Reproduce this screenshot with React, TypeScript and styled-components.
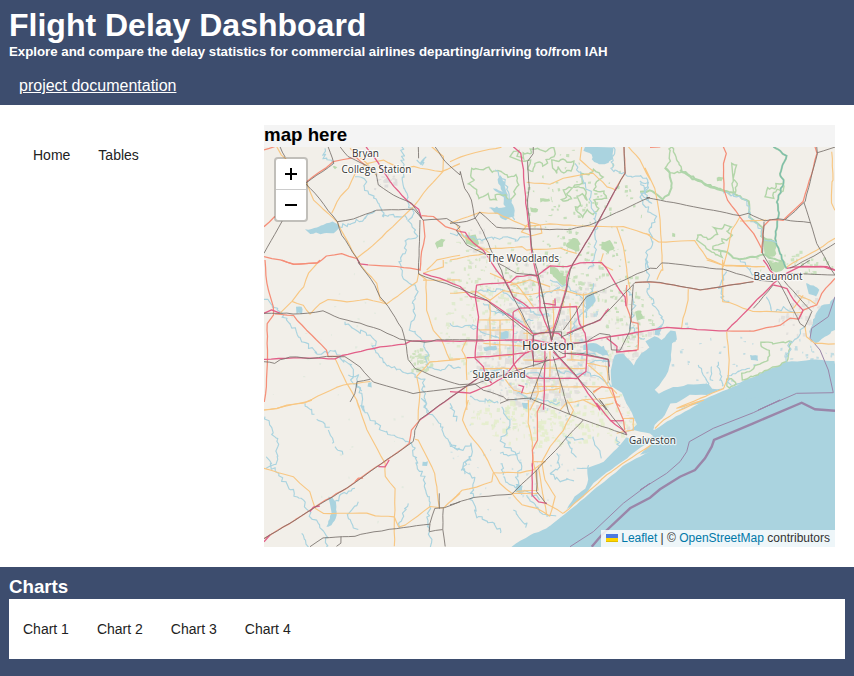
import React from 'react';
import styled, { createGlobalStyle } from 'styled-components';

const GlobalStyle = createGlobalStyle`
  * { box-sizing: border-box; }
  body { margin: 0; background: #fff; font-family: "Liberation Sans", Arial, sans-serif; color: #000; }
  h1, h3, h5 { margin: 0; }
`;

const Page = styled.div`
  height: 676px;
  display: flex;
  flex-direction: column;
`;
const Header = styled.header`
  height: 105px;
  padding: 7px 9px 0;
  background: #3d4d6e;
  color: #fff;
`;
const Title = styled.h1`
  font-size: 32px;
  line-height: 36px;
`;
const Subtitle = styled.h5`
  margin-top: 1px;
  font-size: 13.28px;
  line-height: 15px;
`;
const DocLink = styled.a`
  display: inline-block;
  margin: 18px 10px 0;
  font-size: 16px;
  line-height: 18px;
  color: #fff;
  text-decoration: underline;
`;
const Main = styled.main`
  display: grid;
  grid-template-columns: 245px 571px;
  gap: 10px;
  height: 462px;
  padding: 20px 9px;
`;
const Tabs = styled.nav<{ $inset: string }>`
  display: flex;
  gap: 28px;
  padding: ${p => p.$inset};
  background: #fff;
`;
const Tab = styled.a`
  font-size: 14px;
  line-height: 16px;
  color: #222;
`;
const MapPanel = styled.section`
  background: #f4f4f4;
`;
const Heading = styled.h3`
  font-size: 18.72px;
  line-height: 19px;
`;
const MapHeading = styled(Heading)`
  height: 22px;
`;
const MapFrame = styled.div`
  position: relative;
  width: 571px;
  height: 400px;
  overflow: hidden;
  background: #f2efe9;
`;
const MapCanvas = styled.svg`
  display: block;
`;
const ZoomControl = styled.div`
  position: absolute;
  left: 10px;
  top: 10px;
  width: 34px;
  border: 2px solid rgba(0, 0, 0, 0.2);
  border-radius: 4px;
  background: #fff;
  background-clip: padding-box;
`;
const ZoomButton = styled.button`
  display: flex;
  align-items: center;
  justify-content: center;
  width: 30px;
  height: 30px;
  padding: 0;
  border: 0;
  background: none;
  & + & { height: 31px; border-top: 1px solid #ccc; }
`;
const Attribution = styled.div`
  position: absolute;
  right: 0;
  bottom: 0;
  height: 17px;
  padding: 0 5px;
  background: rgba(255, 255, 255, 0.8);
  color: #333;
  font-size: 12px;
  line-height: 17px;
  white-space: nowrap;
  a { color: #0078a8; }
  svg { width: 12px; height: 8px; margin-right: 3px; }
`;
const Footer = styled.footer`
  flex: 1;
  padding: 10px 9px 0;
  background: #3d4d6e;
`;
const ChartsHeading = styled(Heading)`
  height: 22px;
  color: #fff;
`;
const ChartTabs = styled(Tabs)`
  height: 60px;
`;

/* Map geometry: a bare number selects a sector of the 3x3 grid, "x,y" pairs are thirds of a pixel inside it. */
type Pt = [number, number];
const parse = (s: string): Pt[] => {
  let sector = 1;
  const out: Pt[] = [];
  s.trim().split(/\s+/).forEach(tok => {
    if (!tok.includes(',')) { sector = Number(tok); return; }
    const [x, y] = tok.split(',').map(Number);
    out.push([-4 + ((sector - 1) % 3) * 190 + x / 3, -27 + Math.floor((sector - 1) / 3) * 140 + y / 3]);
  });
  return out;
};
const toPath = (pts: Pt[], close = false) =>
  pts.map(([x, y], i) => `${i ? 'L' : 'M'}${x.toFixed(1)} ${y.toFixed(1)}`).join('') + (close ? 'Z' : '');
const random = (seed: number) => () => {
  seed = (seed * 16807) % 2147483647;
  return seed / 2147483647;
};
const meander = (pts: Pt[], amp: number, step: number, seed: number): Pt[] => {
  const r = random(seed * 7919 + 13);
  const out: Pt[] = [pts[0]];
  for (let i = 1; i < pts.length; i++) {
    const [ax, ay] = pts[i - 1];
    const [bx, by] = pts[i];
    const n = Math.max(1, Math.round(Math.hypot(bx - ax, by - ay) / step));
    for (let k = 1; k <= n; k++) {
      out.push([ax + ((bx - ax) * k) / n + (r() - 0.5) * amp, ay + ((by - ay) * k) / n + (r() - 0.5) * amp]);
    }
  }
  return out;
};

const gulf = `8 185,440 240,405 290,385 340,345 375,290 405,265 415,240 410,205 460,185 500,145 530,110 515,100 540,92
 560,75 545,40 530,10 5 515,400 485,380 482,330 495,285 520,280 550,315 575,280 600,262 6 15,245 45,228 65,240 80,222 90,212
 108,215 110,240 95,252 92,300 78,350 45,390 55,400 100,382 160,372 205,372 215,388 260,383 340,350 440,306 500,300 545,300 585,303
 9 600,200 600,460 8 185,460`;
const islands = [
  '8 300,372 340,335 400,290 430,250 470,218 530,175 560,150 600,125 9 0,125 30,120 45,122 0,163 8 600,155 530,190 440,262 390,305 300,378',
  '9 40,90 45,75 75,45 90,12 6 110,430 150,405 200,405 260,380 300,372 6 250,393 115,450 9 190,5 120,42 70,72 45,88',
  '8 520,100 555,92 600,100 610,110 560,120 525,112',
];
const lakes = [
  '2 405,80 400,92 425,105 425,120 440,132 475,130 490,110 488,80',
  '2 150,165 165,190 172,235 185,240 195,290 165,298 145,285 115,262 165,262 160,235 130,205 160,215 140,180',
  '1 135,328 170,325 190,312 215,305 235,315 235,328 220,342 190,340 150,340',
  '4 108,140 125,140 128,160 110,160',
  '7 205,290 225,300 232,345 215,378 200,380 212,345 212,315',
  '7 488,185 502,183 500,195 488,195',
  '5 405,110 425,90 435,105 440,125 415,150 405,140',
  '6 585,110 568,130 545,135 520,180 510,215 515,240 530,248 560,225 585,210',
  '6 330,285 352,285 352,302 335,302', '6 498,70 520,75 540,90 530,110 505,100',
  '8 198,258 215,255 215,275 198,275', '6 45,210 65,190 60,225 45,225',
  '4 325,368 336,368 335,382 325,380', '5 148,215 175,215 175,235 148,238', '5 100,262 140,258 140,270 100,272',
  '5 400,255 430,250 460,260 480,290 460,285 430,275 400,270',
  '6 320,415 360,415 350,425 320,425', '5 215,428 235,430 230,445 218,442',
];
const rivers = [
  '1 195,85 190,115 220,130', '1 285,170 315,185 320,215 345,230 365,270 370,290 430,285 440,295', '1 235,320 300,302 350,270',
  '1 425,80 430,110 425,160 435,200 445,245 460,290 445,300 465,325 470,350 440,360 435,400 420,430 4 425,10 430,50 460,75 470,100 455,130 465,160 450,200 460,220 490,240 500,280 500,320 540,330 570,315 600,325',
  '4 12,118 30,130 65,165 90,195 120,235 170,280 230,275 240,300 270,310 280,340 275,365 300,390 310,450 7 305,20 350,75 400,110 440,120 460,140 470,200 490,230 500,270 515,310 500,360 510,410 515,440',
  '4 255,185 290,215 320,215 345,245 340,260 370,310 390,320 430,335 460,345 490,360 490,390 500,450 7 490,0 500,30 540,70 560,110 580,145 600,150',
  '7 15,50 35,95 55,125 50,190 20,205', '7 20,170 45,215 80,250 100,280 135,310 150,345 175,370 200,410 200,440',
  '7 135,10 160,45', '7 170,58 205,80', '7 205,90 220,130', '7 225,140 250,160', '7 285,265 240,285 220,315', '7 295,305 265,340 275,375 290,388', '7 445,310 430,345 415,380',
  '7 125,400 140,440', '1 470,120 485,130 500,112 485,125 488,137', '2 0,340 100,360 160,350 200,365 235,345',
  '2 135,150 165,190 175,250 190,295', '2 375,130 400,180 420,220 435,290 440,330 435,410 420,450',
  '2 490,80 485,150 520,160 550,175 590,170 590,210 575,220 600,250 3 0,180 20,190 15,215 0,230 20,265 45,290 30,340 40,370 15,400 30,445 6 20,0 25,50 25,100 45,140 70,180 55,220',
  '3 250,220 300,230 330,260 330,300 365,330 370,360 410,370',
  '6 260,35 240,80 250,120 270,130', '6 300,0 340,40 400,50', '6 380,110 400,155 430,145 460,155', '6 440,310 450,250 480,220 495,200',
  '6 175,315 205,375', '6 215,320 215,365', '6 235,305 245,380', '6 330,325 260,345 270,375',
  '5 150,90 200,125 240,150 260,170 300,165', '5 300,60 350,80 400,120 410,170', '5 430,70 420,130 380,180 360,225',
  '5 60,200 110,220 180,240 220,245', '5 140,150 200,180 250,180', '5 60,335 160,330 200,350 260,340 300,360',
  '5 320,330 360,340 410,340 460,360 500,380', '5 530,80 555,130 540,200 580,240', '5 60,410 100,420 150,430',
  '5 0,190 40,200 80,195', '5 100,130 140,160 180,165', '5 80,100 110,90 150,90', '5 330,80 300,100 260,110', '5 420,310 450,300 480,300', '5 200,400 260,420 330,430',
  '8 60,170 40,200 70,230 65,300 80,350 130,370 155,400', '8 155,20 180,80 150,120 200,165 215,190 200,240 210,280',
  '8 150,160 180,170 210,160', '8 155,190 160,230', '8 190,330 230,380', '8 0,10 20,60',
  '8 320,160 330,200 300,220 330,240 370,240', '8 400,120 350,110 375,170', '8 0,125 30,150 65,130 60,180 35,190 40,220',
  '8 380,205 415,200', '8 430,110 455,170', '8 500,110 510,145', '8 230,285 280,340 320,350', '8 160,230 200,270 250,285 270,300',
  '4 265,345 290,345 300,395', '5 390,280 440,285 480,310',
];
const woods = [
  '2 65,145 100,150 115,142 125,155 145,150 175,170 200,165 205,195 190,215 195,225 175,240 165,225 135,225 140,238 120,240 115,222 85,235 80,210 70,205 55,190 75,180 60,165',
  '2 180,110 190,95 205,92 200,110 220,115 218,100 245,100 240,85 265,85 285,95 310,82 315,100 310,110 290,120 295,130 280,140 270,125 255,130 250,155 235,150 240,120 210,125',
  '2 305,120 325,125 340,115 350,125 370,125 365,155 350,150 340,160 325,140 320,160 310,145',
  '2 340,210 355,202 365,205 350,220 365,235 345,245 335,238 350,230',
  '2 395,160 415,165 430,150 445,160 460,170 435,190 440,200 430,210 460,215 470,235 430,240 445,265 430,285 410,270 400,290 385,275 375,262 395,255 380,230 395,222 410,240 405,205 370,200 395,190',
  '3 75,145 90,125 88,85 98,80 108,120 118,128 125,155 90,160', '3 275,130 288,135 280,175 290,190 285,220 275,200 280,170',
  '3 375,230 382,205 405,205 410,192 430,190 430,215 410,210 400,220 400,235', '3 170,360 175,345 195,350 205,358 235,342 222,322 250,325 255,315 275,320 262,335 275,345 262,360 245,355 250,370 220,378 218,388 240,390 245,410 220,400 195,380',
  '6 305,340 335,330 345,318 385,300 388,270 365,262 363,248 395,246 400,252 425,248 452,244 440,305 305,362', '6 260,358 275,355 290,372 270,385 262,378',
];
const denseWoods = [
  '5 300,15 325,30 348,50 345,80 330,75 315,55 300,40', '3 370,355 395,358 410,372 405,410 385,412 370,395', '6 385,0 400,10 430,0 440,20 415,38 395,30',
  '2 455,365 480,362 495,385 475,400 455,385', '2 350,370 375,352 390,370 385,395 350,380', '5 555,155 575,150 580,175 560,180', '2 240,262 265,265 262,275 242,275',
  '2 270,235 300,235 295,247 272,245', '3 230,173 248,172 245,182 232,183', '3 97,338 108,340 105,350 97,348', '1 525,370 545,355 555,360 550,378 530,385', '1 218,140 230,140 226,147',
  '2 45,345 75,345 90,370 75,380 50,370',
];
const woodLines = ['3 0,215 30,212 70,237 92,215 92,160 75,145', '3 125,155 160,175 200,195 250,210 300,230 325,245 330,290 365,325 365,350 410,370', '3 120,150 160,172 205,200 250,212 270,225',
  '3 400,80 438,105 420,160 432,190 412,235 415,290 405,345 418,400 440,445', '3 235,392 265,400 290,418 320,415 370,405 430,425'];

const primary = [
  '1 50,80 65,105 78,118', '1 140,188 160,240 232,305 265,370 300,430 4 305,20 350,70 360,120 378,130',
  '1 215,280 240,230 265,205 285,160 320,130 370,120 420,145 460,140 545,155 600,130', '1 515,80 550,110 548,155 490,220 460,260 350,365 310,400 290,415',
  '1 270,85 320,130 350,165', '1 500,450 530,420 600,405', '4 180,0 145,40 130,80 95,125 130,135 150,163 180,130 205,118 260,125 320,118 380,132 430,95 470,65 475,40',
  '4 95,125 60,160', '4 12,450 50,445 140,425 190,400 250,375 330,365', '4 225,295 250,350 290,420 300,450 7 290,0 320,90 375,190 375,230 405,265 403,440',
  '4 475,40 498,60 500,150 520,210 545,240 570,300', '4 600,298 510,305 470,350 480,400 475,450 7 475,60', '4 600,60 490,60', '4 490,40 550,20 550,0',
  '7 12,30 50,25 80,15 130,10 155,0', '7 12,205 100,230 120,250 150,275 165,325 190,340 320,340 345,348 403,350',
  '7 403,350 415,380 435,375 510,320 550,325 600,280', '7 465,118 475,120 525,220 537,320',
  '2 0,125 50,105 100,92 155,82', '2 230,187 300,193 340,175 390,165 430,160 470,200 500,210', '2 395,80 390,120 430,155',
  '2 0,310 90,278 140,280 230,320 215,335 245,347 275,340 272,315 240,308 225,320 300,312 440,320 520,320 600,345 3 20,342 55,367 165,362 200,415 250,435 375,440',
  '2 535,80 570,120 600,180 3 15,145 45,205 60,300 68,450 6 65,30 50,60', '2 500,320 520,380 530,450 5 530,30 540,90',
  '2 75,390 215,380 230,390 330,385 380,400', '2 0,420 60,408 110,400', '2 20,315 40,350 80,375 120,400', '2 460,400 450,430 490,450',
  '3 300,290 275,330 265,380 250,440 6 247,0 248,125 270,128 310,145 340,155 380,155 490,158', '3 575,95 580,180 575,185 575,250 585,270',
  '3 585,355 530,390 440,440', '3 300,303 380,300', '6 145,88 145,120 130,175 125,203',
  '6 260,215 268,300 265,350 250,385 180,415 110,445 9 190,0 110,35 70,60 45,85', '6 495,200 500,230 525,250 585,252', '6 200,0 260,18 370,20',
  '6 475,105 510,120 530,135', '6 460,145 490,105',
  '8 55,0 38,60 60,105 95,150 130,215 150,250 185,280 215,315 260,325 300,348 315,290 285,240 275,185 300,140 340,90 370,30 350,0',
  '8 130,218 210,218 250,210 285,185 250,185', '8 130,218 125,245 80,262 35,270 0,305', '8 235,0 235,70 245,110 250,185 265,270 200,275', '8 265,200 275,260 290,345',
  '8 185,280 265,280', '8 290,312 340,340', '8 340,340 385,300 430,262 470,225 530,182 600,137 9 15,150', '8 400,0 440,20 490,10', '8 500,100 550,90 550,55 520,55',
  '5 0,100 80,95 120,120 160,92 230,105 330,90 400,105 440,95', '5 85,180 190,180', '5 85,210 190,210', '5 100,250 230,260', '5 120,120 120,260', '5 150,180 150,300',
  '5 0,298 100,290 190,285', '5 50,240 35,270 50,300 50,360', '5 90,325 180,325', '5 190,325 410,325', '5 250,380 450,380', '5 260,355 265,400 240,450', '5 330,355 330,400',
  '5 205,150 230,200 235,280', '5 340,110 340,140 390,140', '5 310,120 310,230', '5 360,130 365,300', '5 410,250 410,310 470,320 475,370',
  '5 160,350 190,390 230,400 330,385', '5 430,400 455,380 485,385 500,400', '5 50,380 50,450', '5 120,40 200,75 250,140', '5 300,245 300,350', '5 220,300 275,300', '5 350,300 410,300',
  '5 180,75 240,60 300,80', '5 415,315 455,350 475,380 500,430', '5 510,410 400,420 350,430 330,450', '5 400,100 400,210', '5 220,220 280,220 310,200',
];
const trunk = [
  '1 12,90 45,80', '1 140,185 195,145 220,125 250,118 290,112 315,135', '1 12,320 45,290', '1 485,287 520,290 555,320 600,335 2 20,333',
  '1 490,300 495,350 485,395 480,450 4 475,25', '1 12,410 60,420 100,433 175,428 200,408 245,402 290,415', '1 325,435 410,440 470,448 4 480,30',
  '4 15,0 20,70 40,140 40,165 22,190 22,270 20,380 12,425', '4 65,0 100,13 170,10 180,0', '4 45,162 100,167 140,210 200,270 205,290 240,288',
  '7 480,60 455,90 447,130 410,160 380,180 300,235 260,265 230,280 180,312 90,370 12,415',
  '3 250,80 258,100 250,130 252,210 262,240 300,290 340,340 365,385', '3 525,80 530,100 515,160 490,245 430,300 390,300 370,320 365,400',
  '3 30,82 60,82', '6 260,213 340,213 420,195 450,175 475,178 490,150 530,135 545,100 585,55', '5 555,68 600,65 6 60,68 180,90 340,65',
  '5 530,75 530,140 545,185 565,190 565,270 520,275', '8 275,10 262,35 262,120 248,150 247,200', '8 495,0 520,60 525,90', '2 522,80 525,160 500,200', '5 430,395 455,380 485,385 500,430 8 510,20',
  '7 285,245 295,235 310,235',
];
const motorway = [
  '1 318,80 355,130 390,185 440,240 475,268 485,295', '1 290,415 300,432 325,435', '4 490,40 540,55 600,80 5 60,110 110,120 170,160 250,220',
  '4 12,298 100,294 225,296 245,287 360,260 435,252 450,243 600,243 5 250,240 300,250', '4 12,160 35,150 60,160',
  '5 90,350 0,413 4 520,450 7 480,60', '7 12,425 30,405', '7 150,335 160,322 180,318', '7 355,200 375,200 387,180',
  '2 190,80 212,100 220,150 228,250 240,340 245,400 255,450 5 268,80 270,150 300,220 305,245', '2 30,335 45,338 70,370 100,390 140,450 5 170,70 190,110 220,130 240,145',
  '2 500,200 440,315 370,430 350,470 5 350,80 330,150 310,210 305,240', '3 370,420 390,450 6 410,50', '3 440,445 480,440 550,440 585,450',
  '6 260,212 400,70 440,40 480,20 560,20 585,30', '5 300,250 405,248 450,235 600,211 6 80,203 150,207 260,213', '6 400,75 440,85 460,120 490,150 475,180',
  '5 125,370 105,345 100,320 75,295 80,240 85,170 75,110 80,75 180,68 200,50 240,45 260,48 300,18 350,20 390,8 455,8 470,25 495,70 525,110 528,140',
  '5 190,155 210,145 380,140 387,190 405,220 412,280 408,335 380,355 240,355 205,335 190,310 190,155', '5 250,225 275,217 325,220 345,240 345,290 310,300 250,305 245,265 250,225',
  '5 50,293 120,290 230,278 290,250', '5 0,395 60,400 120,375 165,350 190,315 230,275', '5 285,270 282,420 280,450',
  '5 310,275 380,350 450,450 8 440,10 480,60 530,100', '8 247,190 247,285 265,305 290,310', '8 480,62 520,62', '5 350,220 450,180 475,145',
  '5 470,235 500,260 500,275 560,272', '5 350,280 410,285 475,298 478,320', '5 205,375 220,380 215,400', '5 280,130 315,135 315,115',
];
const rail = [
  '1 60,80 75,112', '1 137,190 222,130 205,80', '1 240,80 265,110 345,150 355,195 400,225 455,250 485,295', '1 12,400 65,305',
  '1 135,190 165,220 232,305 245,345 300,430 4 295,8 345,75 360,110 385,140 425,205 435,240 445,300 465,325 510,345 600,375 5 75,372',
  '1 232,305 280,297 350,270 460,268 490,300 560,295 600,320 2 20,330 50,375 110,405', '1 480,300 475,450 4 475,43 600,85 5 110,120 250,230',
  '1 525,80 555,125 600,165 2 30,155 45,205 65,240 72,290 100,335 120,385 145,430 5 170,75 245,215', '1 475,80 475,115',
  '4 12,160 80,160 120,162 190,153 240,175 300,190 360,210 420,238 495,247 530,240 600,240 5 100,240', '4 12,305 45,310 60,300 90,290 150,295 200,290 255,290 300,320 340,367 460,400 600,382 5 75,372 300,300',
  '4 330,358 290,365 285,400 270,425', '5 90,350 0,413 4 520,450 7 480,58 465,90 460,125 380,180 260,265 180,312 90,370 12,415',
  '7 150,440 190,413 285,408 320,400 410,385 510,372 525,325 555,322 600,305', '7 550,325 548,388 555,440', '7 508,395 548,388', '7 510,372 508,395', '7 538,280 538,325', '7 243,410 243,430 230,440',
  '2 250,80 250,100 232,125 237,200 232,240 240,330 248,400 262,450 5 305,240', '2 0,310 50,305 75,295 90,277 140,322 240,328 360,328 420,315 600,232 3 20,232 300,287 325,280 375,303 415,297 510,308',
  '2 522,80 525,160 490,220 440,315 370,430 360,450 5 350,90 305,240', '3 530,80 532,100 495,245 435,300', '3 532,98 585,82', '3 372,305 368,400 395,450',
  '3 492,248 510,305 530,370 575,450 6 585,45', '3 585,370 540,398 450,445', '5 340,210 410,110 600,25 6 50,25 65,8 250,28 290,40 350,60 400,65', '5 335,230 450,178 555,68 600,65 6 60,68 180,90 340,65',
  '6 340,145 400,75', '6 400,40 430,90 480,190 495,200 515,155 430,60', '6 585,45 440,40', '6 480,20 510,0', '2 145,430 5 200,40 265,47 305,240',
  '5 550,75 540,215 510,270 485,270 480,225 450,220 410,245 300,260', '5 300,260 340,280 400,280 475,298 478,360', '5 310,270 470,450 8 450,0 530,105', '5 310,290 355,450 8 360,43', '5 290,290 240,420',
  '5 75,372 100,390 160,410 170,420 240,415 8 250,0 360,43 400,60 530,105', '8 400,60 260,210 185,283 70,292 0,315 7 570,315', '8 260,210 260,275 290,312', '5 250,220 335,215 335,235', '5 250,225 250,320', '8 150,10 175,0',
];
const boundary = '8 360,440 430,395 520,310 600,250 9 0,270 80,220 120,185 140,155 148,125 220,85 340,38 420,0 6 355,450 470,400 580,398 565,330 540,270 510,235 515,205 565,170 585,110';
const limit = '8 425,440 455,405 540,325 600,293 9 60,268 120,230 165,210 195,175 215,140 222,120 340,70 485,8 525,28 585,32';

/* cx, cy, rx, ry, count, fill, max size */
type Patch = [number, number, number, number, number, string, number];
const patches: Patch[] = [
  [270, 208, 62, 52, 480, '#dddcda', 5], [285, 145, 60, 38, 90, '#dddcda', 4], [370, 200, 35, 30, 50, '#dddcda', 4],
  [275, 205, 95, 85, 300, '#dbeac9', 3.2], [290, 275, 85, 25, 190, '#e2edc8', 4], [320, 60, 60, 60, 90, '#b9d9ae', 2.6],
  [300, 125, 70, 35, 120, '#bfdcb3', 2.8], [155, 213, 12, 12, 50, '#c6deb4', 3], [220, 120, 40, 40, 65, '#cfe3be', 3], [205, 170, 35, 35, 45, '#dbeac9', 3],
  [285, 205, 70, 60, 60, '#b8d7df', 3], [365, 165, 25, 40, 55, '#bfdcb3', 2.8], [530, 115, 40, 14, 30, '#c1dfb4', 3],
  [535, 165, 25, 25, 50, '#dddcda', 4], [118, 33, 14, 10, 22, '#d9d8d8', 3.5], [367, 232, 14, 30, 50, '#dddcda', 4],
  [445, 205, 60, 35, 30, '#b5d7e0', 2.2], [540, 210, 30, 20, 30, '#b5d7e0', 2.5], [212, 98, 14, 20, 16, '#dddcda', 4],
  [250, 300, 70, 80, 50, '#c8dfe2', 1.6], [90, 230, 85, 150, 35, '#dfe8dc', 1.5], [368, 266, 15, 18, 25, '#dddcda', 4],
];
const labels: [string, number, number, number, number][] = [
  ['Bryan', 101.5, 9.5, 27, 10], ['College Station', 112.5, 26, 70, 10], ['The Woodlands', 259, 115, 72, 10],
  ['Beaumont', 514, 133, 49, 10], ['Houston', 284, 203, 52, 13], ['Sugar Land', 235, 231, 53, 10], ['Galveston', 388.5, 297, 47, 10],
];

const Roads = ({ lines, color, width }: { lines: string[]; color: string; width: number }) => (
  <g fill="none" stroke={color} strokeWidth={width} strokeLinejoin="round">
    {lines.map((l, i) => <path key={i} d={toPath(meander(parse(l), 0.7, 7, i + 3))} />)}
  </g>
);

const RegionMap = () => (
  <MapCanvas width="571" height="400" viewBox="0 0 571 400">
    <rect width="571" height="400" fill="#f2efe9" />
    {patches.map(([cx, cy, rx, ry, n, fill, size], i) => {
      const r = random(i * 541 + 77);
      let d = '';
      for (let k = 0; k < n; k++) {
        const a = r() * 6.283;
        const q = Math.pow(r(), 0.62);
        const w = 0.8 + r() * size;
        const h = 0.8 + r() * size;
        const x = cx + Math.cos(a) * rx * q;
        const y = cy + Math.sin(a) * ry * q;
        d += `M${x.toFixed(1)} ${y.toFixed(1)}l${w.toFixed(1)} ${(r() - 0.5).toFixed(1)}l${(r() - 0.5).toFixed(1)} ${h.toFixed(1)}l${(-w).toFixed(1)} ${(r() - 0.5).toFixed(1)}z`;
      }
      return <path key={i} d={d} fill={fill} opacity=".8" />;
    })}
    <g fill="#aad3df">
      <path d={toPath(meander(parse(gulf), 1.2, 5, 4), true)} />
      {lakes.map((l, i) => <path key={i} d={toPath(meander(parse(l), 2, 3, i + 9), true)} />)}
    </g>
    <g fill="#f2efe9">{islands.map((l, i) => <path key={i} d={toPath(meander(parse(l), 0.8, 5, i), true)} />)}</g>
    <g fill="none" stroke="#b2d5a8" strokeWidth="1.4">
      {woods.map((l, i) => <path key={i} d={toPath(meander(parse(l), 1.6, 2.5, i + 5), true)} />)}
    </g>
    <g fill="#b9d9ae">
      {denseWoods.map((l, i) => <path key={i} d={toPath(meander(parse(l), 2, 2.5, i + 25), true)} />)}
    </g>
    <g fill="none" stroke="#afd5aa" strokeWidth="2">
      {woodLines.map((l, i) => <path key={i} d={toPath(meander(parse(l), 2, 3, i + 40))} />)}
    </g>
    <path fill="none" stroke="#7dbcae" strokeWidth="1.2" d={toPath(meander(parse(woodLines[3]), 2, 3, 43))} />
    <g fill="none" stroke="#aad3df" strokeWidth="1.15" strokeLinejoin="round">
      {rivers.map((l, i) => <path key={i} d={toPath(meander(parse(l), 4, 2.6, i + 60))} />)}
    </g>
    <g fill="none" stroke="#9a86a9">
      <path d={toPath(parse(boundary))} strokeWidth="1" />
      <path d={toPath(parse(limit))} strokeWidth="2.4" />
    </g>
    <Roads lines={primary} color="#f8c783" width={1.15} />
    <Roads lines={trunk} color="#f58e78" width={1.25} />
    <Roads lines={motorway} color="#e25f88" width={1.3} />
    <Roads lines={rail} color="#77706b" width={0.85} />
    {labels.map(([name, x, y, w, size]) => (
      <text key={name} x={x} y={y} textAnchor="middle" textLength={w} fontSize={size} fontFamily='"Open Sans", "Noto Sans", sans-serif'
        fill="#333" stroke="#fff" strokeOpacity=".7" strokeWidth="2.4" strokeLinejoin="round" paintOrder="stroke">{name}</text>
    ))}
  </MapCanvas>
);

export default function App() {
  return (
    <Page>
      <GlobalStyle />
      <Header>
        <Title>Flight Delay Dashboard</Title>
        <Subtitle>Explore and compare the delay statistics for commercial airlines departing/arriving to/from IAH</Subtitle>
        <DocLink>project documentation</DocLink>
      </Header>
      <Main>
        <Tabs $inset="22px 24px"><Tab>Home</Tab><Tab>Tables</Tab></Tabs>
        <MapPanel>
          <MapHeading>map here</MapHeading>
          <MapFrame>
            <RegionMap />
            <ZoomControl>
              <ZoomButton aria-label="Zoom in">
                <svg width="14" height="14"><path d="M1 7h12M7 1v12" stroke="#000" strokeWidth="2" /></svg>
              </ZoomButton>
              <ZoomButton aria-label="Zoom out">
                <svg width="14" height="14"><path d="M1 7h12" stroke="#000" strokeWidth="2" /></svg>
              </ZoomButton>
            </ZoomControl>
            <Attribution>
              <a><svg viewBox="0 0 12 8"><path fill="#4C7BE1" d="M0 0h12v4H0z" /><path fill="#FFD500" d="M0 4h12v3H0z" /><path fill="#E0BC00" d="M0 7h12v1H0z" /></svg>Leaflet</a>
              {' | © '}<a>OpenStreetMap</a> contributors
            </Attribution>
          </MapFrame>
        </MapPanel>
      </Main>
      <Footer>
        <ChartsHeading>Charts</ChartsHeading>
        <ChartTabs $inset="22px 14px">
          <Tab>Chart 1</Tab><Tab>Chart 2</Tab><Tab>Chart 3</Tab><Tab>Chart 4</Tab>
        </ChartTabs>
      </Footer>
    </Page>
  );
}
